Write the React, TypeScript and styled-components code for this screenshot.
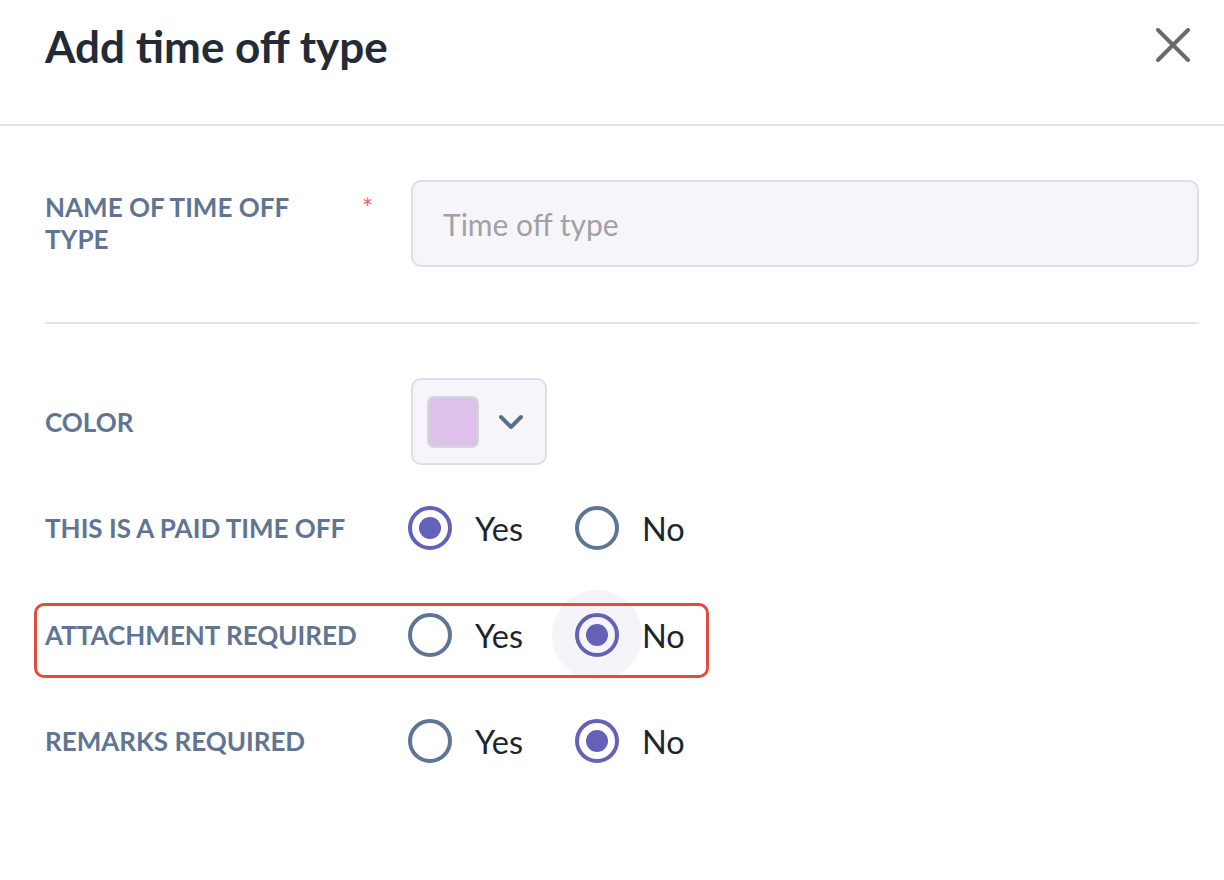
import * as React from "react";
import styled, { createGlobalStyle } from "styled-components";

const GlobalStyle = createGlobalStyle`
  html, body {
    margin: 0;
    padding: 0;
    background: #fff;
    font-family: Lato, "Open Sans", "Liberation Sans", sans-serif;
  }
`;

const Dialog = styled.div`
  width: 1224px;
  height: 880px;
  background: #fff;
  box-sizing: border-box;
`;

const Header = styled.div`
  height: 126px;
  box-sizing: border-box;
  border-bottom: 2px solid #e4e4e6;
  display: flex;
  align-items: flex-start;
  justify-content: space-between;
  padding: 18px 34px 0 45px;
`;

const Title = styled.h1`
  margin: 0;
  font-size: 44px;
  line-height: 56px;
  font-weight: 700;
  color: #232b37;
`;

const CloseButton = styled.button`
  border: none;
  background: none;
  padding: 0;
  margin-top: 10px;
  width: 34px;
  height: 34px;
  cursor: pointer;
  display: flex;
  align-items: center;
  justify-content: center;
`;

const Form = styled.div`
  padding: 54px 25px 0 45px;
  display: flex;
  flex-direction: column;
`;

const Row = styled.div<{ $h: number; $mt?: number; $highlight?: boolean }>`
  position: relative;
  display: grid;
  grid-template-columns: 366px 1fr;
  align-items: center;
  height: ${(p) => p.$h}px;
  margin-top: ${(p) => p.$mt ?? 0}px;

  ${(p) =>
    p.$highlight &&
    `
    &::after {
      content: "";
      position: absolute;
      left: -11px;
      top: 13px;
      width: 675px;
      height: 75px;
      box-sizing: border-box;
      border: 3px solid #e04e3b;
      border-radius: 10px;
      pointer-events: none;
    }
  `}
`;

const LabelCell = styled.div<{ $top?: boolean }>`
  align-self: ${(p) => (p.$top ? "start" : "center")};
  padding-top: ${(p) => (p.$top ? "11px" : "0")};
  display: flex;
  align-items: flex-start;
  justify-content: space-between;
  gap: 20px;
`;

const Label = styled.label`
  font-size: 26px;
  line-height: 32px;
  font-weight: 700;
  color: #5f7593;
  text-transform: uppercase;
  white-space: normal;
`;

const Required = styled.span`
  color: #f06464;
  font-size: 26px;
  line-height: 26px;
  margin-top: 4px;
  margin-right: 38px;
`;

const TextInput = styled.input`
  width: 100%;
  height: 87px;
  box-sizing: border-box;
  background: #f6f6fa;
  border: 2px solid #dcdfe6;
  border-radius: 10px;
  padding: 0 30px;
  font-family: inherit;
  font-size: 30px;
  color: #232b37;
  outline: none;

  &::placeholder {
    color: #a0a1a8;
  }
`;

const Divider = styled.hr`
  margin: 55px 0 0;
  border: none;
  border-top: 2px solid #e4e4e6;
`;

const ColorPicker = styled.button`
  width: 136px;
  height: 87px;
  box-sizing: border-box;
  background: #f6f6fa;
  border: 2px solid #dcdfe6;
  border-radius: 10px;
  padding: 0 0 0 14px;
  display: flex;
  align-items: center;
  gap: 20px;
  cursor: pointer;
`;

const Swatch = styled.span<{ $color: string }>`
  width: 52px;
  height: 52px;
  box-sizing: border-box;
  border-radius: 7px;
  border: 2px solid #d3d6dd;
  background: ${(p) => p.$color};
`;

const RadioGroup = styled.div`
  display: flex;
  align-items: center;
  margin-left: -26px;
`;

const RadioOption = styled.label`
  display: flex;
  align-items: center;
  margin-right: 29px;
  cursor: pointer;
`;

const Target = styled.span<{ $hover?: boolean }>`
  width: 90px;
  height: 90px;
  border-radius: 50%;
  background: ${(p) => (p.$hover ? "#f5f5f9" : "transparent")};
  display: flex;
  align-items: center;
  justify-content: center;
`;

const Circle = styled.span<{ $checked: boolean }>`
  width: 44px;
  height: 44px;
  box-sizing: border-box;
  border-radius: 50%;
  border: 4px solid ${(p) => (p.$checked ? "#6361b8" : "#5f7593")};
  display: flex;
  align-items: center;
  justify-content: center;

  &::after {
    content: "";
    width: 22px;
    height: 22px;
    border-radius: 50%;
    background: ${(p) => (p.$checked ? "#6361b8" : "transparent")};
  }
`;

const OptionText = styled.span`
  font-size: 32.5px;
  color: #1e2530;
`;

const CloseIcon = () => (
  <svg width="34" height="34" viewBox="0 0 34 34">
    <path d="M2 2 L32 32 M32 2 L2 32" stroke="#6b6b6b" strokeWidth="4" strokeLinecap="round" />
  </svg>
);

const Chevron = () => (
  <svg width="24" height="16" viewBox="0 0 24 16">
    <path d="M2 3 L12 13 L22 3" fill="none" stroke="#5a6f8a" strokeWidth="4" strokeLinecap="round" strokeLinejoin="round" />
  </svg>
);

interface YesNoProps {
  value: boolean;
  hover?: boolean;
}

const YesNo = ({ value, hover }: YesNoProps) => (
  <RadioGroup>
    <RadioOption>
      <Target>
        <Circle $checked={value} />
      </Target>
      <OptionText>Yes</OptionText>
    </RadioOption>
    <RadioOption>
      <Target $hover={hover}>
        <Circle $checked={!value} />
      </Target>
      <OptionText>No</OptionText>
    </RadioOption>
  </RadioGroup>
);

const App = () => (
  <Dialog>
    <GlobalStyle />
    <Header>
      <Title>Add time off type</Title>
      <CloseButton aria-label="Close">
        <CloseIcon />
      </CloseButton>
    </Header>
    <Form>
      <Row $h={87}>
        <LabelCell $top>
          <Label>Name of time off type</Label>
          <Required>*</Required>
        </LabelCell>
        <TextInput placeholder="Time off type" />
      </Row>
      <Divider />
      <Row $h={87} $mt={54}>
        <LabelCell>
          <Label>Color</Label>
        </LabelCell>
        <div>
          <ColorPicker>
            <Swatch $color="#dec1e8" />
            <Chevron />
          </ColorPicker>
        </div>
      </Row>
      <Row $h={90} $mt={18}>
        <LabelCell>
          <Label>This is a paid time off</Label>
        </LabelCell>
        <YesNo value={true} />
      </Row>
      <Row $h={90} $mt={17} $highlight>
        <LabelCell>
          <Label>Attachment required</Label>
        </LabelCell>
        <YesNo value={false} hover />
      </Row>
      <Row $h={90} $mt={16}>
        <LabelCell>
          <Label>Remarks required</Label>
        </LabelCell>
        <YesNo value={false} />
      </Row>
    </Form>
  </Dialog>
);

export default App;
